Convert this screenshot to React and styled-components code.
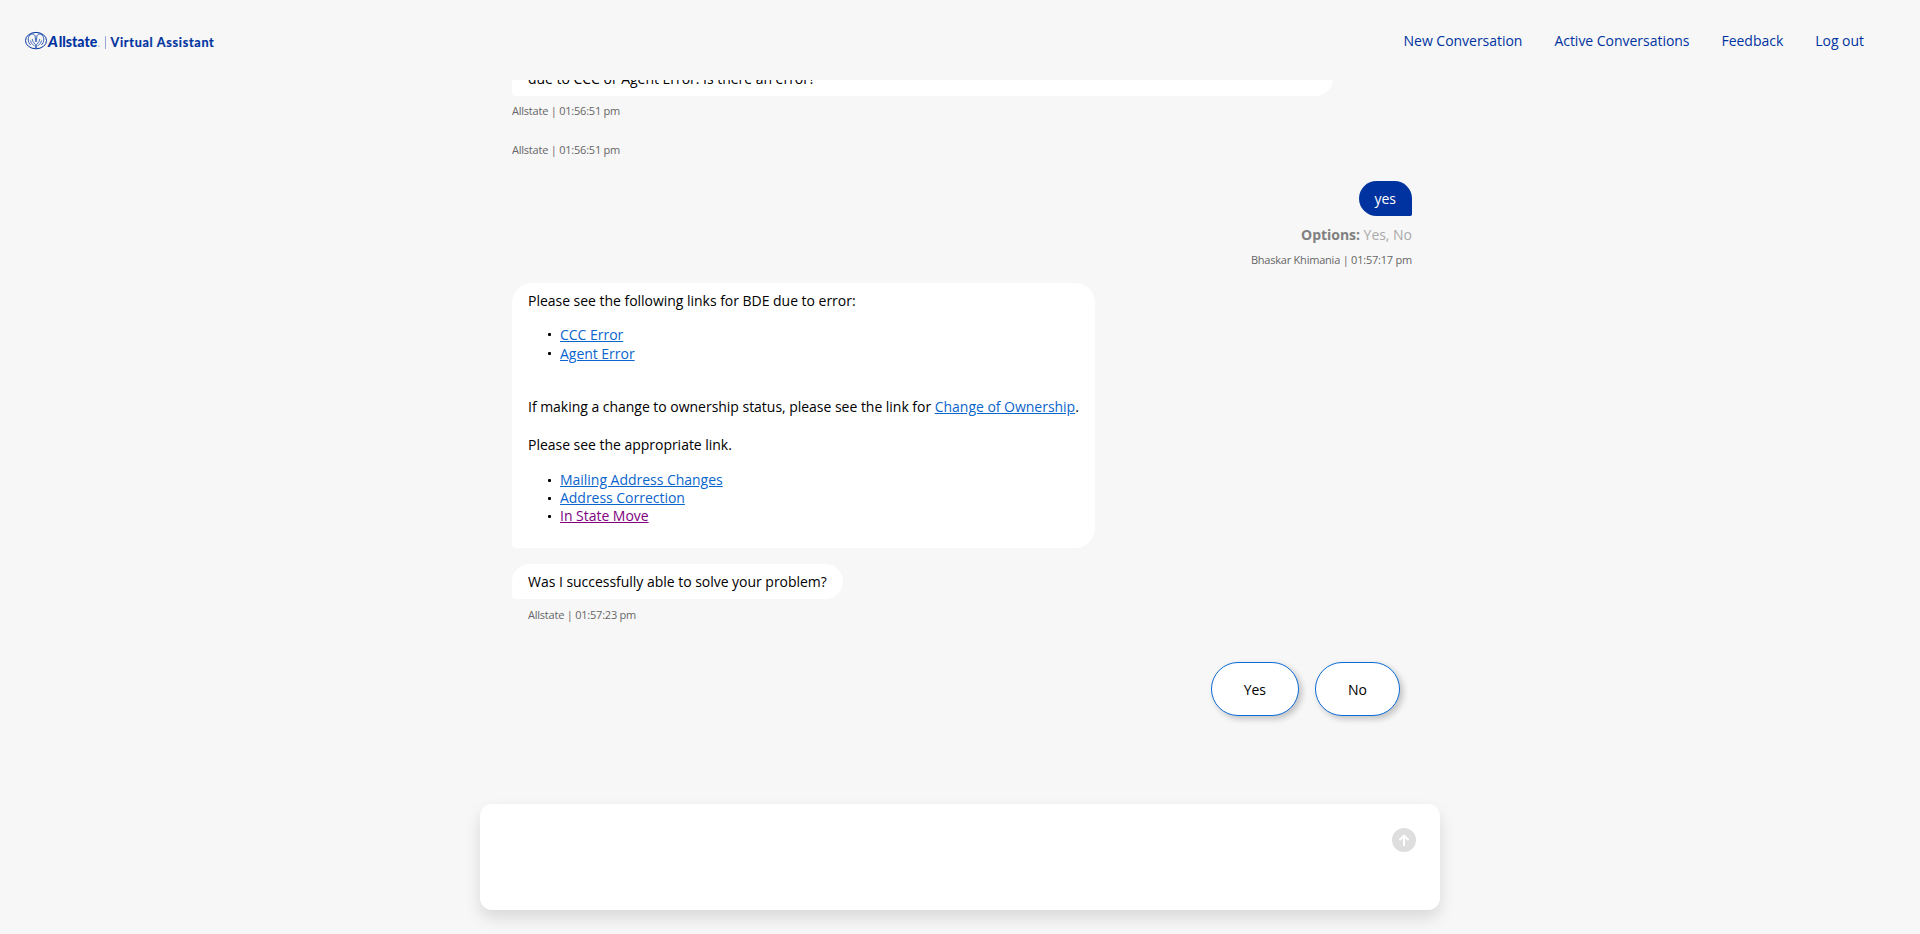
import React from "react";
import styled, { createGlobalStyle } from "styled-components";

const GlobalStyle = createGlobalStyle`
  * { box-sizing: border-box; }
  body {
    margin: 0;
    background: #f7f7f7;
    color: #000;
    font-family: "Open Sans", "Noto Sans", sans-serif;
    font-size: 14px;
    line-height: 19px;
    letter-spacing: -0.027px;
  }
`;

const Page = styled.div`
  display: flex;
  flex-direction: column;
  height: 934px;
  overflow: hidden;
`;

const Header = styled.header`
  display: flex;
  flex: none;
  align-items: center;
  justify-content: space-between;
  height: 80px;
  padding: 2px 56px 0 24px;
`;

const Logo = styled.svg`
  display: block;
  width: 200px;
  height: 24px;
  fill: #0033a0;
  letter-spacing: 0;
`;

const Nav = styled.nav`
  display: flex;
  gap: 32px;
  padding-bottom: 2px;
`;

const NavLink = styled.a`
  color: #0033a0;
  text-decoration: none;
`;

const Chat = styled.main`
  display: flex;
  flex-direction: column;
  align-items: flex-start;
  flex: none;
  width: 900px;
  height: 724px;
  margin: 0 auto;
  overflow: hidden;
  position: relative;
  left: 2px;
`;

const Bubble = styled.div`
  flex: none;
  width: ${(p) => p.$width || "auto"};
  margin-top: ${(p) => p.$top || 0}px;
  padding: 8px 16px;
  align-self: ${(p) => (p.$mine ? "flex-end" : "flex-start")};
  background: ${(p) => (p.$mine ? "#0033a0" : "#fff")};
  color: ${(p) => (p.$mine ? "#fff" : "#000")};
  border-radius: ${(p) => (p.$mine ? "20px 20px 2px 20px" : "20px 20px 20px 4px")};
`;

const Meta = styled.div`
  flex: none;
  margin: ${(p) => p.$top}px 0 0 ${(p) => p.$indent || 0}px;
  align-self: ${(p) => (p.$mine ? "flex-end" : "flex-start")};
  color: #666;
  font-size: 11px;
  letter-spacing: -0.22px;
  line-height: 15px;
`;

const Options = styled.div`
  margin-top: 9px;
  align-self: flex-end;
  color: #aaa;
  b { color: #808080; }
`;

const Paragraph = styled.p`
  margin: ${(p) => p.$top || 0}px 0 0;
`;

const Links = styled.ul`
  list-style: none;
  margin: ${(p) => p.$top}px 0 ${(p) => p.$bottom || 0}px;
  padding: 0 0 0 20px;
  line-height: ${(p) => p.$line}px;
`;

const Item = styled.li`
  display: flex;
  align-items: center;
  gap: 9px;
  &::before {
    content: "";
    width: 3px;
    height: 3px;
    border-radius: 1px;
    background: #000;
  }
`;

const Link = styled.a`
  color: ${(p) => (p.$visited ? "#800080" : "#0a65cc")};
  text-decoration: underline;
`;

const Replies = styled.div`
  display: flex;
  gap: 16px;
  margin: 40px 12px 0 0;
  align-self: flex-end;
`;

const Reply = styled.button`
  height: 54px;
  padding: 0 32px;
  border: 1px solid #0a6bd6;
  border-radius: 27px;
  background: #fff;
  color: #000;
  font: inherit;
  box-shadow: 3px 3px 6px rgba(0, 0, 0, 0.22);
`;

const Composer = styled.form`
  display: flex;
  flex: none;
  justify-content: flex-end;
  width: 960px;
  height: 106px;
  margin: 0 auto;
  padding: 24px;
  border-radius: 12px;
  background: #fff;
  box-shadow: 0 8px 16px rgba(0, 0, 0, 0.12);
`;

const Send = styled.button`
  width: 24px;
  height: 24px;
  padding: 0;
  border: 0;
  border-radius: 50%;
  background: #dedede;
  svg { display: block; }
`;

function AllstateLogo() {
  return (
    <Logo viewBox="0 0 200 24" aria-label="Allstate Virtual Assistant">
      <g fill="none" stroke="#0033a0" strokeWidth="1" transform="translate(0 0.4)">
        <ellipse cx="12" cy="11.2" rx="10.5" ry="8.2" />
        <path d="M12 12.5C10.8 10.8 11.8 8.6 11 6.4C10.2 4.4 7.6 4 5.8 5.8C3.4 8.4 3.8 13 6.6 15.6M12 12.5C13.2 10.8 12.2 8.6 13 6.4C13.8 4.4 16.4 4 18.2 5.8C20.6 8.4 20.2 13 17.4 15.6" strokeWidth="0.8" />
        <path d="M8.2 9.5L8.9 12L11.4 15.2V18.6M6.4 11L7.4 13.6L10.2 16.5M15.8 9.5L15.1 12L12.6 15.2V18.6M17.6 11L16.6 13.6L13.8 16.5" strokeWidth="0.7" />
      </g>
      <g fontFamily="Lato, sans-serif" fontWeight="900">
        <text x="24" y="18" fontStyle="italic" fontSize="15">A</text>
        <text x="34.7" y="18" fontSize="15" textLength="38.5" lengthAdjust="spacingAndGlyphs">llstate</text>
      </g>
      <circle cx="75" cy="17" r="0.6" opacity="0.6" />
      <rect x="81" y="7" width="1" height="13" opacity="0.4" />
      <text x="86.5" y="18" fontFamily="Lato, sans-serif" fontSize="12.6" fontWeight="700" stroke="#0033a0" strokeWidth="0.2" textLength="103.3">Virtual Assistant</text>
    </Logo>
  );
}

const NAV = ["New Conversation", "Active Conversations", "Feedback", "Log out"];

export default function App() {
  return (
    <Page>
      <GlobalStyle />
      <Header>
        <AllstateLogo />
        <Nav>
          {NAV.map((label) => <NavLink key={label}>{label}</NavLink>)}
        </Nav>
      </Header>
      <Chat>
        <Bubble $width="821px" $top={-19}>due to CCC or Agent Error. Is there an error?</Bubble>
        <Meta $top={7}>Allstate | 01:56:51 pm</Meta>
        <Meta $top={24}>Allstate | 01:56:51 pm</Meta>
        <Bubble $mine $top={24}>yes</Bubble>
        <Options><b>Options:</b> Yes, No</Options>
        <Meta $mine $top={8}>Bhaskar Khimania | 01:57:17 pm</Meta>
        <Bubble $top={16}>
          <Paragraph>Please see the following links for BDE due to error:</Paragraph>
          <Links $top={15} $line={19}>
            <Item><Link>CCC Error</Link></Item>
            <Item><Link>Agent Error</Link></Item>
          </Links>
          <Paragraph $top={34}>
            If making a change to ownership status, please see the link for <Link>Change of Ownership</Link>.
          </Paragraph>
          <Paragraph $top={19}>Please see the appropriate link.</Paragraph>
          <Links $top={17} $line={18} $bottom={15}>
            <Item><Link>Mailing Address Changes</Link></Item>
            <Item><Link>Address Correction</Link></Item>
            <Item><Link $visited>In State Move</Link></Item>
          </Links>
        </Bubble>
        <Bubble $top={16}>Was I successfully able to solve your problem?</Bubble>
        <Meta $top={8} $indent={16}>Allstate | 01:57:23 pm</Meta>
        <Replies>
          <Reply>Yes</Reply>
          <Reply>No</Reply>
        </Replies>
      </Chat>
      <Composer>
        <Send type="button" aria-label="Send">
          <svg width="24" height="24" viewBox="0 0 24 24" fill="none" stroke="#fff" strokeWidth="2">
            <path d="M12 18V8M7.5 12L12 7.7L16.5 12" />
          </svg>
        </Send>
      </Composer>
    </Page>
  );
}
